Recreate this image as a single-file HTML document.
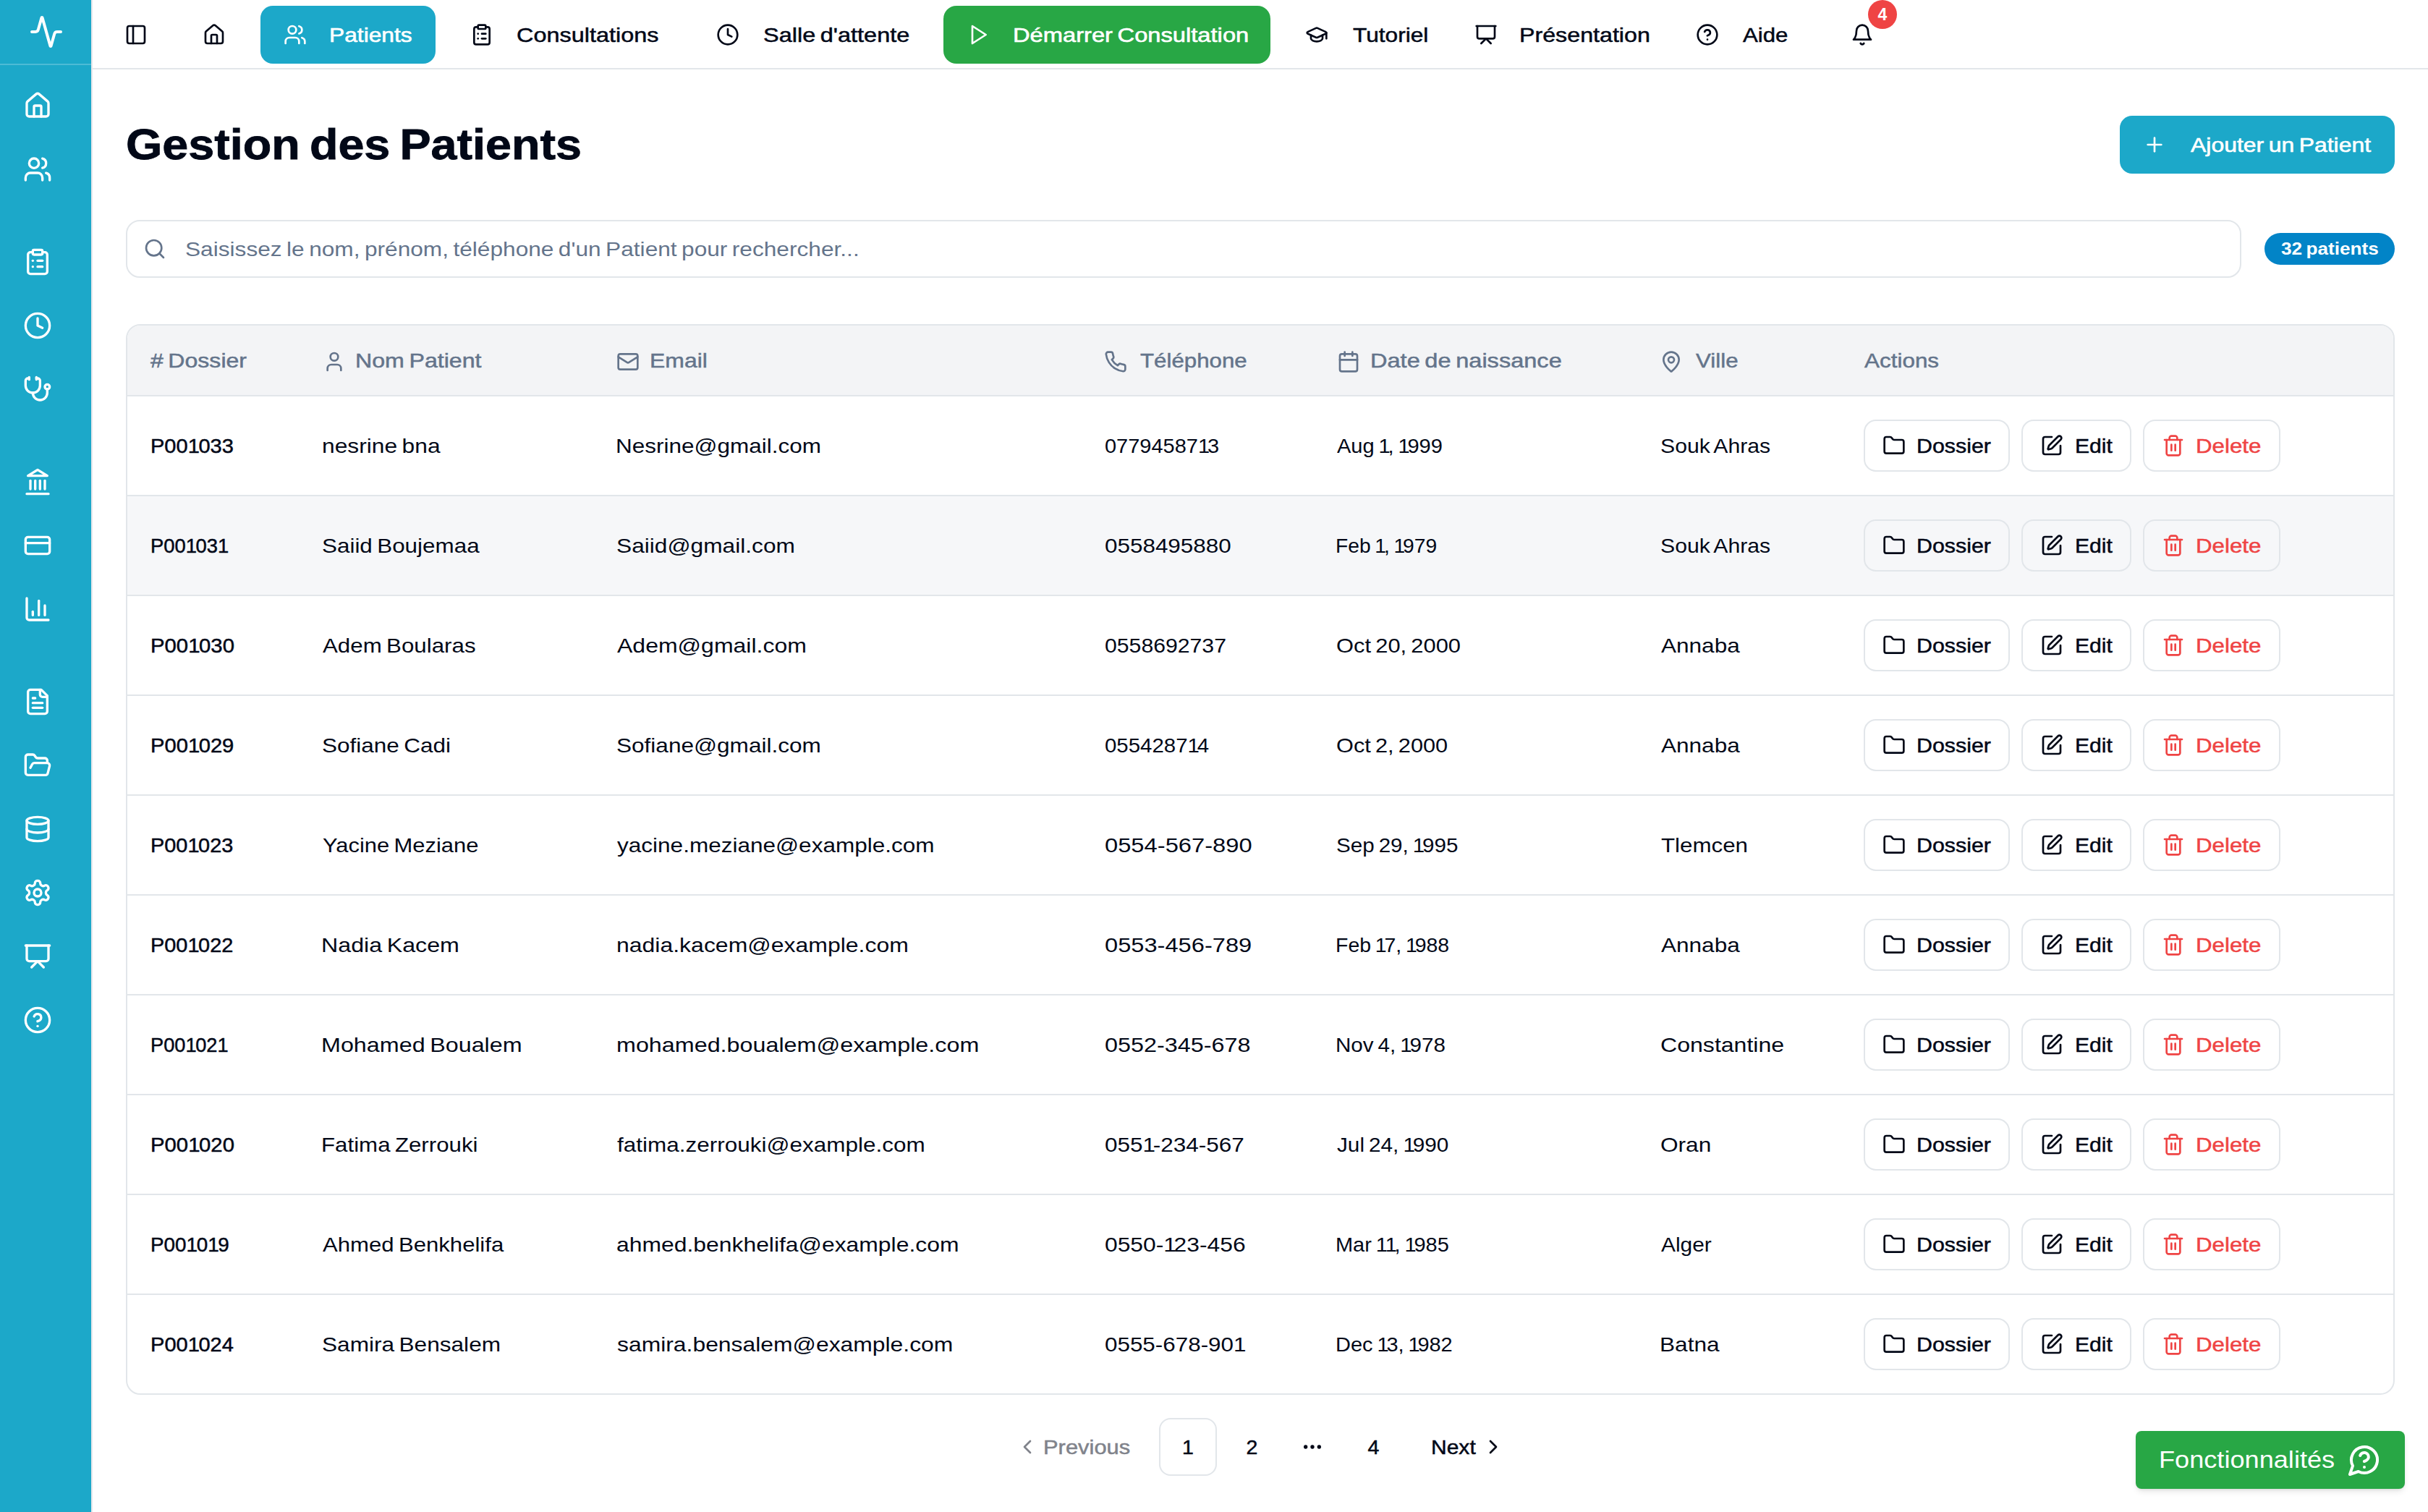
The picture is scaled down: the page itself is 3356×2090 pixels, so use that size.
<!DOCTYPE html>
<html lang="fr"><head><meta charset="utf-8"><title>Gestion des Patients</title>
<style>
html,body{margin:0;padding:0;background:#fff}
body{position:relative;width:3356px;height:2090px;overflow:hidden;font-family:"Liberation Sans",sans-serif;color:#020817}
div,.i,.t{position:absolute}
.t{white-space:pre;display:block;transform-origin:0 50%}
.t i{font-style:normal;margin-right:-0.11em}
.t b{font-weight:inherit;margin-right:-0.05em}
svg{fill:none;stroke:currentColor;stroke-width:2;stroke-linecap:round;stroke-linejoin:round;overflow:visible}
</style></head><body>
<svg width="0" height="0" style="position:absolute"><symbol id="activity" viewBox="0 0 24 24"><path d="M22 12h-2.48a2 2 0 0 0-1.93 1.46l-2.35 8.36a.25.25 0 0 1-.48 0L9.24 2.18a.25.25 0 0 0-.48 0l-2.35 8.36A2 2 0 0 1 4.49 12H2"/></symbol><symbol id="house" viewBox="0 0 24 24"><path d="M15 21v-8a1 1 0 0 0-1-1h-4a1 1 0 0 0-1 1v8"/><path d="M3 10a2 2 0 0 1 .709-1.528l7-5.999a2 2 0 0 1 2.582 0l7 5.999A2 2 0 0 1 21 10v9a2 2 0 0 1-2 2H5a2 2 0 0 1-2-2z"/></symbol><symbol id="users" viewBox="0 0 24 24"><path d="M16 21v-2a4 4 0 0 0-4-4H6a4 4 0 0 0-4 4v2"/><circle cx="9" cy="7" r="4"/><path d="M22 21v-2a4 4 0 0 0-3-3.87"/><path d="M16 3.13a4 4 0 0 1 0 7.75"/></symbol><symbol id="cliplist" viewBox="0 0 24 24"><rect width="8" height="4" x="8" y="2" rx="1" ry="1"/><path d="M16 4h2a2 2 0 0 1 2 2v14a2 2 0 0 1-2 2H6a2 2 0 0 1-2-2V6a2 2 0 0 1 2-2h2"/><path d="M12 11h4"/><path d="M12 16h4"/><path d="M8 11h.01"/><path d="M8 16h.01"/></symbol><symbol id="clock" viewBox="0 0 24 24"><circle cx="12" cy="12" r="10"/><polyline points="12 6 12 12 16 14"/></symbol><symbol id="stetho" viewBox="0 0 24 24"><path d="M11 2v2"/><path d="M5 2v2"/><path d="M5 3H4a2 2 0 0 0-2 2v4a6 6 0 0 0 12 0V5a2 2 0 0 0-2-2h-1"/><path d="M8 15a6 6 0 0 0 12 0v-3"/><circle cx="20" cy="10" r="2"/></symbol><symbol id="landmark" viewBox="0 0 24 24"><line x1="3" x2="21" y1="22" y2="22"/><line x1="6" x2="6" y1="18" y2="11"/><line x1="10" x2="10" y1="18" y2="11"/><line x1="14" x2="14" y1="18" y2="11"/><line x1="18" x2="18" y1="18" y2="11"/><polygon points="12 2 20 7 4 7"/></symbol><symbol id="card" viewBox="0 0 24 24"><rect width="20" height="14" x="2" y="5" rx="2"/><line x1="2" x2="22" y1="10" y2="10"/></symbol><symbol id="chart" viewBox="0 0 24 24"><path d="M3 3v16a2 2 0 0 0 2 2h16"/><path d="M18 17V9"/><path d="M13 17V5"/><path d="M8 17v-3"/></symbol><symbol id="filetext" viewBox="0 0 24 24"><path d="M15 2H6a2 2 0 0 0-2 2v16a2 2 0 0 0 2 2h12a2 2 0 0 0 2-2V7Z"/><path d="M14 2v4a2 2 0 0 0 2 2h4"/><path d="M10 9H8"/><path d="M16 13H8"/><path d="M16 17H8"/></symbol><symbol id="folderopen" viewBox="0 0 24 24"><path d="m6 14 1.5-2.9A2 2 0 0 1 9.24 10H20a2 2 0 0 1 1.94 2.5l-1.54 6a2 2 0 0 1-1.95 1.5H4a2 2 0 0 1-2-2V5a2 2 0 0 1 2-2h3.9a2 2 0 0 1 1.69.9l.81 1.2a2 2 0 0 0 1.67.9H18a2 2 0 0 1 2 2v2"/></symbol><symbol id="database" viewBox="0 0 24 24"><ellipse cx="12" cy="5" rx="9" ry="3"/><path d="M3 5V19A9 3 0 0 0 21 19V5"/><path d="M3 12A9 3 0 0 0 21 12"/></symbol><symbol id="settings" viewBox="0 0 24 24"><path d="M12.22 2h-.44a2 2 0 0 0-2 2v.18a2 2 0 0 1-1 1.73l-.43.25a2 2 0 0 1-2 0l-.15-.08a2 2 0 0 0-2.73.73l-.22.38a2 2 0 0 0 .73 2.73l.15.1a2 2 0 0 1 1 1.72v.51a2 2 0 0 1-1 1.74l-.15.09a2 2 0 0 0-.73 2.73l.22.38a2 2 0 0 0 2.73.73l.15-.08a2 2 0 0 1 2 0l.43.25a2 2 0 0 1 1 1.73V20a2 2 0 0 0 2 2h.44a2 2 0 0 0 2-2v-.18a2 2 0 0 1 1-1.73l.43-.25a2 2 0 0 1 2 0l.15.08a2 2 0 0 0 2.73-.73l.22-.39a2 2 0 0 0-.73-2.73l-.15-.08a2 2 0 0 1-1-1.74v-.5a2 2 0 0 1 1-1.74l.15-.09a2 2 0 0 0 .73-2.73l-.22-.38a2 2 0 0 0-2.73-.73l-.15.08a2 2 0 0 1-2 0l-.43-.25a2 2 0 0 1-1-1.73V4a2 2 0 0 0-2-2z"/><circle cx="12" cy="12" r="3"/></symbol><symbol id="present" viewBox="0 0 24 24"><path d="M2 3h20"/><path d="M21 3v11a2 2 0 0 1-2 2H5a2 2 0 0 1-2-2V3"/><path d="m7 21 5-5 5 5"/></symbol><symbol id="help" viewBox="0 0 24 24"><circle cx="12" cy="12" r="10"/><path d="M9.09 9a3 3 0 0 1 5.83 1c0 2-3 3-3 3"/><path d="M12 17h.01"/></symbol><symbol id="panel" viewBox="0 0 24 24"><rect width="18" height="18" x="3" y="3" rx="2"/><path d="M9 3v18"/></symbol><symbol id="play" viewBox="0 0 24 24"><polygon points="6 3 20 12 6 21 6 3"/></symbol><symbol id="gradcap" viewBox="0 0 24 24"><path d="M21.42 10.922a1 1 0 0 0-.019-1.838L12.83 5.18a2 2 0 0 0-1.66 0L2.6 9.08a1 1 0 0 0 0 1.832l8.57 3.908a2 2 0 0 0 1.66 0z"/><path d="M22 10v6"/><path d="M6 12.5V16a6 3 0 0 0 12 0v-3.5"/></symbol><symbol id="bell" viewBox="0 0 24 24"><path d="M6 8a6 6 0 0 1 12 0c0 7 3 9 3 9H3s3-2 3-9"/><path d="M10.3 21a1.94 1.94 0 0 0 3.4 0"/></symbol><symbol id="plus" viewBox="0 0 24 24"><path d="M5 12h14"/><path d="M12 5v14"/></symbol><symbol id="search" viewBox="0 0 24 24"><circle cx="11" cy="11" r="8"/><path d="m21 21-4.3-4.3"/></symbol><symbol id="user" viewBox="0 0 24 24"><path d="M19 21v-2a4 4 0 0 0-4-4H9a4 4 0 0 0-4 4v2"/><circle cx="12" cy="7" r="4"/></symbol><symbol id="mail" viewBox="0 0 24 24"><rect width="20" height="16" x="2" y="4" rx="2"/><path d="m22 7-8.97 5.7a1.94 1.94 0 0 1-2.06 0L2 7"/></symbol><symbol id="phone" viewBox="0 0 24 24"><path d="M22 16.92v3a2 2 0 0 1-2.18 2 19.79 19.79 0 0 1-8.63-3.07 19.5 19.5 0 0 1-6-6 19.79 19.79 0 0 1-3.07-8.67A2 2 0 0 1 4.11 2h3a2 2 0 0 1 2 1.72 12.84 12.84 0 0 0 .7 2.81 2 2 0 0 1-.45 2.11L8.09 9.91a16 16 0 0 0 6 6l1.27-1.27a2 2 0 0 1 2.11-.45 12.84 12.84 0 0 0 2.81.7A2 2 0 0 1 22 16.92z"/></symbol><symbol id="calendar" viewBox="0 0 24 24"><path d="M8 2v4"/><path d="M16 2v4"/><rect width="18" height="18" x="3" y="4" rx="2"/><path d="M3 10h18"/></symbol><symbol id="mappin" viewBox="0 0 24 24"><path d="M20 10c0 4.993-5.539 10.193-7.399 11.799a1 1 0 0 1-1.202 0C9.539 20.193 4 14.993 4 10a8 8 0 0 1 16 0"/><circle cx="12" cy="10" r="3"/></symbol><symbol id="folder" viewBox="0 0 24 24"><path d="M20 20a2 2 0 0 0 2-2V8a2 2 0 0 0-2-2h-7.9a2 2 0 0 1-1.69-.9L9.6 3.9A2 2 0 0 0 7.93 3H4a2 2 0 0 0-2 2v13a2 2 0 0 0 2 2Z"/></symbol><symbol id="pen" viewBox="0 0 24 24"><path d="M12 3H5a2 2 0 0 0-2 2v14a2 2 0 0 0 2 2h14a2 2 0 0 0 2-2v-7"/><path d="M18.375 2.625a1 1 0 0 1 3 3l-9.013 9.014a2 2 0 0 1-.853.505l-2.873.84a.5.5 0 0 1-.62-.62l.84-2.873a2 2 0 0 1 .506-.852z"/></symbol><symbol id="trash" viewBox="0 0 24 24"><path d="M3 6h18"/><path d="M19 6v14c0 1-1 2-2 2H7c-1 0-2-1-2-2V6"/><path d="M8 6V4c0-1 1-2 2-2h4c1 0 2 1 2 2v2"/><line x1="10" x2="10" y1="11" y2="17"/><line x1="14" x2="14" y1="11" y2="17"/></symbol><symbol id="chevl" viewBox="0 0 24 24"><path d="m15 18-6-6 6-6"/></symbol><symbol id="chevr" viewBox="0 0 24 24"><path d="m9 18 6-6-6-6"/></symbol><symbol id="dots" viewBox="0 0 24 24"><circle cx="12" cy="12" r="1"/><circle cx="19" cy="12" r="1"/><circle cx="5" cy="12" r="1"/></symbol><symbol id="msgq" viewBox="0 0 24 24"><path d="M7.9 20A9 9 0 1 0 4 16.1L2 22Z"/><path d="M9.09 9a3 3 0 0 1 5.83 1c0 2-3 3-3 3"/><path d="M12 17h.01"/></symbol></svg>
<div style="left:0px;top:0px;width:126px;height:2090px;background:#1ca8c9;border-right:2px solid #e5e7eb"></div>
<div style="left:0px;top:88px;width:126px;height:2px;background:rgba(255,255,255,.22)"></div>
<svg class="i" style="left:40px;top:20px;color:#fff" width="48" height="48" viewBox="0 0 24 24"><use href="#activity"/></svg>
<svg class="i" style="left:32px;top:125.5px;color:#fff" width="40" height="40" viewBox="0 0 24 24"><use href="#house"/></svg>
<svg class="i" style="left:32px;top:214px;color:#fff" width="40" height="40" viewBox="0 0 24 24"><use href="#users"/></svg>
<svg class="i" style="left:32px;top:342px;color:#fff" width="40" height="40" viewBox="0 0 24 24"><use href="#cliplist"/></svg>
<svg class="i" style="left:32px;top:430px;color:#fff" width="40" height="40" viewBox="0 0 24 24"><use href="#clock"/></svg>
<svg class="i" style="left:32px;top:518px;color:#fff" width="40" height="40" viewBox="0 0 24 24"><use href="#stetho"/></svg>
<svg class="i" style="left:32px;top:646px;color:#fff" width="40" height="40" viewBox="0 0 24 24"><use href="#landmark"/></svg>
<svg class="i" style="left:32px;top:734px;color:#fff" width="40" height="40" viewBox="0 0 24 24"><use href="#card"/></svg>
<svg class="i" style="left:32px;top:822px;color:#fff" width="40" height="40" viewBox="0 0 24 24"><use href="#chart"/></svg>
<svg class="i" style="left:32px;top:950px;color:#fff" width="40" height="40" viewBox="0 0 24 24"><use href="#filetext"/></svg>
<svg class="i" style="left:32px;top:1038px;color:#fff" width="40" height="40" viewBox="0 0 24 24"><use href="#folderopen"/></svg>
<svg class="i" style="left:32px;top:1126px;color:#fff" width="40" height="40" viewBox="0 0 24 24"><use href="#database"/></svg>
<svg class="i" style="left:32px;top:1214px;color:#fff" width="40" height="40" viewBox="0 0 24 24"><use href="#settings"/></svg>
<svg class="i" style="left:32px;top:1302px;color:#fff" width="40" height="40" viewBox="0 0 24 24"><use href="#present"/></svg>
<svg class="i" style="left:32px;top:1390px;color:#fff" width="40" height="40" viewBox="0 0 24 24"><use href="#help"/></svg>
<div style="left:128px;top:94px;width:3228px;height:2px;background:#e2e6ea"></div>
<svg class="i" style="left:172px;top:32px;color:#020817" width="32" height="32" viewBox="0 0 24 24"><use href="#panel"/></svg>
<svg class="i" style="left:280px;top:32px;color:#020817" width="32" height="32" viewBox="0 0 24 24"><use href="#house"/></svg>
<div style="left:360px;top:8px;width:242px;height:80px;background:#1ca8c9;border-radius:17px"></div>
<svg class="i" style="left:392px;top:32px;color:#fff" width="32" height="32" viewBox="0 0 24 24"><use href="#users"/></svg>
<span class="t" style="font-size:28.5px;color:#fff;-webkit-text-stroke:0.62px #fff;transform:scaleX(1.1139);left:454.9px;top:26.5px;line-height:43px;">Patients</span>
<svg class="i" style="left:650px;top:32px;color:#020817" width="32" height="32" viewBox="0 0 24 24"><use href="#cliplist"/></svg>
<span class="t" style="font-size:28.5px;color:#020817;-webkit-text-stroke:0.5px #020817;transform:scaleX(1.1375);left:713.9px;top:26.5px;line-height:43px;">Consultations</span>
<svg class="i" style="left:990px;top:32px;color:#020817" width="32" height="32" viewBox="0 0 24 24"><use href="#clock"/></svg>
<span class="t" style="font-size:28.5px;color:#020817;-webkit-text-stroke:0.5px #020817;word-spacing:-2.14px;transform:scaleX(1.1391);left:1054.7px;top:26.5px;line-height:43px;">Salle d'attente</span>
<div style="left:1304px;top:8px;width:452px;height:80px;background:#28a745;border-radius:18px"></div>
<svg class="i" style="left:1336px;top:32px;color:#fff" width="32" height="32" viewBox="0 0 24 24"><use href="#play"/></svg>
<span class="t" style="font-size:28.5px;color:#fff;-webkit-text-stroke:0.62px #fff;word-spacing:-2.14px;transform:scaleX(1.1464);left:1399.5px;top:26.5px;line-height:43px;">Démarrer Consultation</span>
<svg class="i" style="left:1804px;top:32px;color:#020817" width="32" height="32" viewBox="0 0 24 24"><use href="#gradcap"/></svg>
<span class="t" style="font-size:28.5px;color:#020817;-webkit-text-stroke:0.5px #020817;transform:scaleX(1.1107);left:1869.8px;top:26.5px;line-height:43px;">Tutoriel</span>
<svg class="i" style="left:2038px;top:32px;color:#020817" width="32" height="32" viewBox="0 0 24 24"><use href="#present"/></svg>
<span class="t" style="font-size:28.5px;color:#020817;-webkit-text-stroke:0.5px #020817;transform:scaleX(1.1302);left:2100.2px;top:26.5px;line-height:43px;">Présentation</span>
<svg class="i" style="left:2344px;top:32px;color:#020817" width="32" height="32" viewBox="0 0 24 24"><use href="#help"/></svg>
<span class="t" style="font-size:28.5px;color:#020817;-webkit-text-stroke:0.5px #020817;transform:scaleX(1.0927);left:2408.8px;top:26.5px;line-height:43px;">Aide</span>
<svg class="i" style="left:2558px;top:32px;color:#020817" width="32" height="32" viewBox="0 0 24 24"><use href="#bell"/></svg>
<div style="left:2582px;top:0px;width:40px;height:40px;background:#ef4444;border-radius:50%"></div>
<span class="t" style="font-size:23px;color:#fff;font-weight:700;left:2595.5px;top:3.0px;line-height:34px;">4</span>
<span class="t" style="font-size:60px;color:#020817;font-weight:700;-webkit-text-stroke:0.8px #020817;word-spacing:-4.50px;transform:scaleX(1.0779);left:173.8px;top:154.6px;line-height:90px;">Gestion des Patients</span>
<div style="left:2930px;top:160px;width:380px;height:80px;background:#1ca8c9;border-radius:17px"></div>
<svg class="i" style="left:2962px;top:184px;color:#fff" width="32" height="32" viewBox="0 0 24 24"><use href="#plus"/></svg>
<span class="t" style="font-size:28.5px;color:#fff;-webkit-text-stroke:0.62px #fff;word-spacing:-2.14px;transform:scaleX(1.1206);left:3028.0px;top:178.5px;line-height:43px;">Ajouter un Patient</span>
<div style="left:174px;top:304px;width:2924px;height:80px;box-sizing:border-box;border:2px solid #e2e6ea;border-radius:19px;background:#fff"></div>
<svg class="i" style="left:198px;top:328px;color:#64748b" width="32" height="32" viewBox="0 0 24 24"><use href="#search"/></svg>
<span class="t" style="font-size:28.5px;color:#64748b;word-spacing:-2.14px;transform:scaleX(1.1104);left:255.5px;top:322.5px;line-height:43px;">Saisissez le nom, prénom, téléphone d'un Patient pour rechercher...</span>
<div style="left:3130px;top:322px;width:180px;height:44px;background:#0284c7;border-radius:22px"></div>
<span class="t" style="font-size:24px;color:#fff;font-weight:700;word-spacing:-1.80px;transform:scaleX(1.0914);left:3153.0px;top:326.0px;line-height:36px;">32 patients</span>
<div style="left:174px;top:448px;width:3136px;height:1480px;box-sizing:border-box;border:2px solid #e2e6ea;border-radius:20px;overflow:hidden"><div style="left:0;top:0;width:3132px;height:96px;background:#f3f4f6"></div><div style="left:0;top:236px;width:3132px;height:136px;background:#f6f7f9"></div><div style="left:0;top:96px;width:3132px;height:2px;background:#e2e6ea"></div><div style="left:0;top:234px;width:3132px;height:2px;background:#e2e6ea"></div><div style="left:0;top:372px;width:3132px;height:2px;background:#e2e6ea"></div><div style="left:0;top:510px;width:3132px;height:2px;background:#e2e6ea"></div><div style="left:0;top:648px;width:3132px;height:2px;background:#e2e6ea"></div><div style="left:0;top:786px;width:3132px;height:2px;background:#e2e6ea"></div><div style="left:0;top:924px;width:3132px;height:2px;background:#e2e6ea"></div><div style="left:0;top:1062px;width:3132px;height:2px;background:#e2e6ea"></div><div style="left:0;top:1200px;width:3132px;height:2px;background:#e2e6ea"></div><div style="left:0;top:1338px;width:3132px;height:2px;background:#e2e6ea"></div></div>
<span class="t" style="font-size:28.5px;color:#64748b;-webkit-text-stroke:0.5px #64748b;word-spacing:-2.14px;transform:scaleX(1.1251);left:208.4px;top:476.8px;line-height:43px;"># Dossier</span>
<svg class="i" style="left:446px;top:484px;color:#64748b" width="32" height="32" viewBox="0 0 24 24"><use href="#user"/></svg>
<span class="t" style="font-size:28.5px;color:#64748b;-webkit-text-stroke:0.5px #64748b;word-spacing:-2.14px;transform:scaleX(1.1285);left:491.4px;top:476.8px;line-height:43px;">Nom Patient</span>
<svg class="i" style="left:852px;top:484px;color:#64748b" width="32" height="32" viewBox="0 0 24 24"><use href="#mail"/></svg>
<span class="t" style="font-size:28.5px;color:#64748b;-webkit-text-stroke:0.5px #64748b;transform:scaleX(1.1202);left:898.1px;top:476.8px;line-height:43px;">Email</span>
<svg class="i" style="left:1526px;top:484px;color:#64748b" width="32" height="32" viewBox="0 0 24 24"><use href="#phone"/></svg>
<span class="t" style="font-size:28.5px;color:#64748b;-webkit-text-stroke:0.5px #64748b;transform:scaleX(1.0961);left:1575.5px;top:476.8px;line-height:43px;">Téléphone</span>
<svg class="i" style="left:1848px;top:484px;color:#64748b" width="32" height="32" viewBox="0 0 24 24"><use href="#calendar"/></svg>
<span class="t" style="font-size:28.5px;color:#64748b;-webkit-text-stroke:0.5px #64748b;word-spacing:-2.14px;transform:scaleX(1.1422);left:1893.7px;top:476.8px;line-height:43px;">Date de naissance</span>
<svg class="i" style="left:2294px;top:484px;color:#64748b" width="32" height="32" viewBox="0 0 24 24"><use href="#mappin"/></svg>
<span class="t" style="font-size:28.5px;color:#64748b;-webkit-text-stroke:0.5px #64748b;transform:scaleX(1.0974);left:2343.7px;top:476.8px;line-height:43px;">Ville</span>
<span class="t" style="font-size:28.5px;color:#64748b;-webkit-text-stroke:0.5px #64748b;transform:scaleX(1.1029);left:2577.4px;top:476.8px;line-height:43px;">Actions</span>
<span class="t" style="font-size:28.5px;color:#020817;-webkit-text-stroke:0.5px #020817;transform:scaleX(1.0188);left:208.2px;top:594.5px;line-height:43px;">P00<b>1</b>033</span>
<span class="t" style="font-size:28.5px;color:#020817;word-spacing:-2.14px;transform:scaleX(1.1140);left:444.9px;top:594.5px;line-height:43px;">nesrine bna</span>
<span class="t" style="font-size:28.5px;color:#020817;transform:scaleX(1.1048);left:850.7px;top:594.5px;line-height:43px;">Nesrine@gmail.com</span>
<span class="t" style="font-size:28.5px;color:#020817;transform:scaleX(1.0168);left:1526.6px;top:594.5px;line-height:43px;">07794587<i>1</i>3</span>
<span class="t" style="font-size:28.5px;color:#020817;word-spacing:-2.14px;transform:scaleX(1.0181);left:1847.8px;top:594.5px;line-height:43px;">Aug <i>1</i>, <i>1</i>999</span>
<span class="t" style="font-size:28.5px;color:#020817;word-spacing:-2.14px;transform:scaleX(1.0595);left:2294.6px;top:594.5px;line-height:43px;">Souk Ahras</span>
<div style="left:2576px;top:580px;width:202px;height:72px;box-sizing:border-box;border:2px solid #e2e6ea;border-radius:17px"></div>
<svg class="i" style="left:2602px;top:600px;color:#020817" width="32" height="32" viewBox="0 0 24 24"><use href="#folder"/></svg>
<span class="t" style="font-size:28.5px;color:#020817;-webkit-text-stroke:0.5px #020817;transform:scaleX(1.0661);left:2648.9px;top:594.5px;line-height:43px;">Dossier</span>
<div style="left:2794px;top:580px;width:152px;height:72px;box-sizing:border-box;border:2px solid #e2e6ea;border-radius:17px"></div>
<svg class="i" style="left:2820px;top:600px;color:#020817" width="32" height="32" viewBox="0 0 24 24"><use href="#pen"/></svg>
<span class="t" style="font-size:28.5px;color:#020817;-webkit-text-stroke:0.5px #020817;transform:scaleX(1.0553);left:2868.3px;top:594.5px;line-height:43px;">Edit</span>
<div style="left:2962px;top:580px;width:190px;height:72px;box-sizing:border-box;border:2px solid #e2e6ea;border-radius:17px"></div>
<svg class="i" style="left:2988px;top:600px;color:#ef4444" width="32" height="32" viewBox="0 0 24 24"><use href="#trash"/></svg>
<span class="t" style="font-size:28.5px;color:#ef4444;-webkit-text-stroke:0.5px #ef4444;transform:scaleX(1.0977);left:3035.2px;top:594.5px;line-height:43px;">Delete</span>
<span class="t" style="font-size:28.5px;color:#020817;-webkit-text-stroke:0.5px #020817;transform:scaleX(0.9605);left:208.3px;top:732.5px;line-height:43px;">P00<b>1</b>03<b>1</b></span>
<span class="t" style="font-size:28.5px;color:#020817;word-spacing:-2.14px;transform:scaleX(1.1020);left:444.9px;top:732.5px;line-height:43px;">Saiid Boujemaa</span>
<span class="t" style="font-size:28.5px;color:#020817;transform:scaleX(1.1115);left:851.8px;top:732.5px;line-height:43px;">Saiid@gmail.com</span>
<span class="t" style="font-size:28.5px;color:#020817;transform:scaleX(1.1024);left:1526.5px;top:732.5px;line-height:43px;">0558495880</span>
<span class="t" style="font-size:28.5px;color:#020817;word-spacing:-2.14px;transform:scaleX(0.9890);left:1845.8px;top:732.5px;line-height:43px;">Feb <i>1</i>, <i>1</i>979</span>
<span class="t" style="font-size:28.5px;color:#020817;word-spacing:-2.14px;transform:scaleX(1.0595);left:2294.6px;top:732.5px;line-height:43px;">Souk Ahras</span>
<div style="left:2576px;top:718px;width:202px;height:72px;box-sizing:border-box;border:2px solid #e2e6ea;border-radius:17px"></div>
<svg class="i" style="left:2602px;top:738px;color:#020817" width="32" height="32" viewBox="0 0 24 24"><use href="#folder"/></svg>
<span class="t" style="font-size:28.5px;color:#020817;-webkit-text-stroke:0.5px #020817;transform:scaleX(1.0661);left:2648.9px;top:732.5px;line-height:43px;">Dossier</span>
<div style="left:2794px;top:718px;width:152px;height:72px;box-sizing:border-box;border:2px solid #e2e6ea;border-radius:17px"></div>
<svg class="i" style="left:2820px;top:738px;color:#020817" width="32" height="32" viewBox="0 0 24 24"><use href="#pen"/></svg>
<span class="t" style="font-size:28.5px;color:#020817;-webkit-text-stroke:0.5px #020817;transform:scaleX(1.0553);left:2868.3px;top:732.5px;line-height:43px;">Edit</span>
<div style="left:2962px;top:718px;width:190px;height:72px;box-sizing:border-box;border:2px solid #e2e6ea;border-radius:17px"></div>
<svg class="i" style="left:2988px;top:738px;color:#ef4444" width="32" height="32" viewBox="0 0 24 24"><use href="#trash"/></svg>
<span class="t" style="font-size:28.5px;color:#ef4444;-webkit-text-stroke:0.5px #ef4444;transform:scaleX(1.0977);left:3035.2px;top:732.5px;line-height:43px;">Delete</span>
<span class="t" style="font-size:28.5px;color:#020817;-webkit-text-stroke:0.5px #020817;transform:scaleX(1.0288);left:208.1px;top:870.5px;line-height:43px;">P00<b>1</b>030</span>
<span class="t" style="font-size:28.5px;color:#020817;word-spacing:-2.14px;transform:scaleX(1.0979);left:446.0px;top:870.5px;line-height:43px;">Adem Boularas</span>
<span class="t" style="font-size:28.5px;color:#020817;transform:scaleX(1.1231);left:852.9px;top:870.5px;line-height:43px;">Adem@gmail.com</span>
<span class="t" style="font-size:28.5px;color:#020817;transform:scaleX(1.0597);left:1526.5px;top:870.5px;line-height:43px;">0558692737</span>
<span class="t" style="font-size:28.5px;color:#020817;word-spacing:-2.14px;transform:scaleX(1.0823);left:1846.7px;top:870.5px;line-height:43px;">Oct 20, 2000</span>
<span class="t" style="font-size:28.5px;color:#020817;transform:scaleX(1.1066);left:2295.7px;top:870.5px;line-height:43px;">Annaba</span>
<div style="left:2576px;top:856px;width:202px;height:72px;box-sizing:border-box;border:2px solid #e2e6ea;border-radius:17px"></div>
<svg class="i" style="left:2602px;top:876px;color:#020817" width="32" height="32" viewBox="0 0 24 24"><use href="#folder"/></svg>
<span class="t" style="font-size:28.5px;color:#020817;-webkit-text-stroke:0.5px #020817;transform:scaleX(1.0661);left:2648.9px;top:870.5px;line-height:43px;">Dossier</span>
<div style="left:2794px;top:856px;width:152px;height:72px;box-sizing:border-box;border:2px solid #e2e6ea;border-radius:17px"></div>
<svg class="i" style="left:2820px;top:876px;color:#020817" width="32" height="32" viewBox="0 0 24 24"><use href="#pen"/></svg>
<span class="t" style="font-size:28.5px;color:#020817;-webkit-text-stroke:0.5px #020817;transform:scaleX(1.0553);left:2868.3px;top:870.5px;line-height:43px;">Edit</span>
<div style="left:2962px;top:856px;width:190px;height:72px;box-sizing:border-box;border:2px solid #e2e6ea;border-radius:17px"></div>
<svg class="i" style="left:2988px;top:876px;color:#ef4444" width="32" height="32" viewBox="0 0 24 24"><use href="#trash"/></svg>
<span class="t" style="font-size:28.5px;color:#ef4444;-webkit-text-stroke:0.5px #ef4444;transform:scaleX(1.0977);left:3035.2px;top:870.5px;line-height:43px;">Delete</span>
<span class="t" style="font-size:28.5px;color:#020817;-webkit-text-stroke:0.5px #020817;transform:scaleX(1.0233);left:208.2px;top:1008.5px;line-height:43px;">P00<b>1</b>029</span>
<span class="t" style="font-size:28.5px;color:#020817;word-spacing:-2.14px;transform:scaleX(1.1051);left:444.9px;top:1008.5px;line-height:43px;">Sofiane Cadi</span>
<span class="t" style="font-size:28.5px;color:#020817;transform:scaleX(1.1072);left:851.8px;top:1008.5px;line-height:43px;">Sofiane@gmail.com</span>
<span class="t" style="font-size:28.5px;color:#020817;transform:scaleX(1.0320);left:1526.6px;top:1008.5px;line-height:43px;">0554287<i>1</i>4</span>
<span class="t" style="font-size:28.5px;color:#020817;word-spacing:-2.14px;transform:scaleX(1.0771);left:1846.7px;top:1008.5px;line-height:43px;">Oct 2, 2000</span>
<span class="t" style="font-size:28.5px;color:#020817;transform:scaleX(1.1066);left:2295.7px;top:1008.5px;line-height:43px;">Annaba</span>
<div style="left:2576px;top:994px;width:202px;height:72px;box-sizing:border-box;border:2px solid #e2e6ea;border-radius:17px"></div>
<svg class="i" style="left:2602px;top:1014px;color:#020817" width="32" height="32" viewBox="0 0 24 24"><use href="#folder"/></svg>
<span class="t" style="font-size:28.5px;color:#020817;-webkit-text-stroke:0.5px #020817;transform:scaleX(1.0661);left:2648.9px;top:1008.5px;line-height:43px;">Dossier</span>
<div style="left:2794px;top:994px;width:152px;height:72px;box-sizing:border-box;border:2px solid #e2e6ea;border-radius:17px"></div>
<svg class="i" style="left:2820px;top:1014px;color:#020817" width="32" height="32" viewBox="0 0 24 24"><use href="#pen"/></svg>
<span class="t" style="font-size:28.5px;color:#020817;-webkit-text-stroke:0.5px #020817;transform:scaleX(1.0553);left:2868.3px;top:1008.5px;line-height:43px;">Edit</span>
<div style="left:2962px;top:994px;width:190px;height:72px;box-sizing:border-box;border:2px solid #e2e6ea;border-radius:17px"></div>
<svg class="i" style="left:2988px;top:1014px;color:#ef4444" width="32" height="32" viewBox="0 0 24 24"><use href="#trash"/></svg>
<span class="t" style="font-size:28.5px;color:#ef4444;-webkit-text-stroke:0.5px #ef4444;transform:scaleX(1.0977);left:3035.2px;top:1008.5px;line-height:43px;">Delete</span>
<span class="t" style="font-size:28.5px;color:#020817;-webkit-text-stroke:0.5px #020817;transform:scaleX(1.0142);left:208.2px;top:1146.5px;line-height:43px;">P00<b>1</b>023</span>
<span class="t" style="font-size:28.5px;color:#020817;word-spacing:-2.14px;transform:scaleX(1.0851);left:446.0px;top:1146.5px;line-height:43px;">Yacine Meziane</span>
<span class="t" style="font-size:28.5px;color:#020817;transform:scaleX(1.1064);left:852.9px;top:1146.5px;line-height:43px;">yacine.meziane@example.com</span>
<span class="t" style="font-size:28.5px;color:#020817;transform:scaleX(1.1473);left:1526.5px;top:1146.5px;line-height:43px;">0554-567-890</span>
<span class="t" style="font-size:28.5px;color:#020817;word-spacing:-2.14px;transform:scaleX(1.0380);left:1846.8px;top:1146.5px;line-height:43px;">Sep 29, <i>1</i>995</span>
<span class="t" style="font-size:28.5px;color:#020817;transform:scaleX(1.0974);left:2295.7px;top:1146.5px;line-height:43px;">Tlemcen</span>
<div style="left:2576px;top:1132px;width:202px;height:72px;box-sizing:border-box;border:2px solid #e2e6ea;border-radius:17px"></div>
<svg class="i" style="left:2602px;top:1152px;color:#020817" width="32" height="32" viewBox="0 0 24 24"><use href="#folder"/></svg>
<span class="t" style="font-size:28.5px;color:#020817;-webkit-text-stroke:0.5px #020817;transform:scaleX(1.0661);left:2648.9px;top:1146.5px;line-height:43px;">Dossier</span>
<div style="left:2794px;top:1132px;width:152px;height:72px;box-sizing:border-box;border:2px solid #e2e6ea;border-radius:17px"></div>
<svg class="i" style="left:2820px;top:1152px;color:#020817" width="32" height="32" viewBox="0 0 24 24"><use href="#pen"/></svg>
<span class="t" style="font-size:28.5px;color:#020817;-webkit-text-stroke:0.5px #020817;transform:scaleX(1.0553);left:2868.3px;top:1146.5px;line-height:43px;">Edit</span>
<div style="left:2962px;top:1132px;width:190px;height:72px;box-sizing:border-box;border:2px solid #e2e6ea;border-radius:17px"></div>
<svg class="i" style="left:2988px;top:1152px;color:#ef4444" width="32" height="32" viewBox="0 0 24 24"><use href="#trash"/></svg>
<span class="t" style="font-size:28.5px;color:#ef4444;-webkit-text-stroke:0.5px #ef4444;transform:scaleX(1.0977);left:3035.2px;top:1146.5px;line-height:43px;">Delete</span>
<span class="t" style="font-size:28.5px;color:#020817;-webkit-text-stroke:0.5px #020817;transform:scaleX(1.0142);left:208.2px;top:1284.5px;line-height:43px;">P00<b>1</b>022</span>
<span class="t" style="font-size:28.5px;color:#020817;word-spacing:-2.14px;transform:scaleX(1.1301);left:443.7px;top:1284.5px;line-height:43px;">Nadia Kacem</span>
<span class="t" style="font-size:28.5px;color:#020817;transform:scaleX(1.1219);left:851.8px;top:1284.5px;line-height:43px;">nadia.kacem@example.com</span>
<span class="t" style="font-size:28.5px;color:#020817;transform:scaleX(1.1450);left:1526.5px;top:1284.5px;line-height:43px;">0553-456-789</span>
<span class="t" style="font-size:28.5px;color:#020817;word-spacing:-2.14px;transform:scaleX(0.9982);left:1845.8px;top:1284.5px;line-height:43px;">Feb <i>1</i>7, <i>1</i>988</span>
<span class="t" style="font-size:28.5px;color:#020817;transform:scaleX(1.1066);left:2295.7px;top:1284.5px;line-height:43px;">Annaba</span>
<div style="left:2576px;top:1270px;width:202px;height:72px;box-sizing:border-box;border:2px solid #e2e6ea;border-radius:17px"></div>
<svg class="i" style="left:2602px;top:1290px;color:#020817" width="32" height="32" viewBox="0 0 24 24"><use href="#folder"/></svg>
<span class="t" style="font-size:28.5px;color:#020817;-webkit-text-stroke:0.5px #020817;transform:scaleX(1.0661);left:2648.9px;top:1284.5px;line-height:43px;">Dossier</span>
<div style="left:2794px;top:1270px;width:152px;height:72px;box-sizing:border-box;border:2px solid #e2e6ea;border-radius:17px"></div>
<svg class="i" style="left:2820px;top:1290px;color:#020817" width="32" height="32" viewBox="0 0 24 24"><use href="#pen"/></svg>
<span class="t" style="font-size:28.5px;color:#020817;-webkit-text-stroke:0.5px #020817;transform:scaleX(1.0553);left:2868.3px;top:1284.5px;line-height:43px;">Edit</span>
<div style="left:2962px;top:1270px;width:190px;height:72px;box-sizing:border-box;border:2px solid #e2e6ea;border-radius:17px"></div>
<svg class="i" style="left:2988px;top:1290px;color:#ef4444" width="32" height="32" viewBox="0 0 24 24"><use href="#trash"/></svg>
<span class="t" style="font-size:28.5px;color:#ef4444;-webkit-text-stroke:0.5px #ef4444;transform:scaleX(1.0977);left:3035.2px;top:1284.5px;line-height:43px;">Delete</span>
<span class="t" style="font-size:28.5px;color:#020817;-webkit-text-stroke:0.5px #020817;transform:scaleX(0.9551);left:208.3px;top:1422.5px;line-height:43px;">P00<b>1</b>02<b>1</b></span>
<span class="t" style="font-size:28.5px;color:#020817;word-spacing:-2.14px;transform:scaleX(1.1332);left:443.7px;top:1422.5px;line-height:43px;">Mohamed Boualem</span>
<span class="t" style="font-size:28.5px;color:#020817;transform:scaleX(1.1332);left:851.8px;top:1422.5px;line-height:43px;">mohamed.boualem@example.com</span>
<span class="t" style="font-size:28.5px;color:#020817;transform:scaleX(1.1347);left:1526.5px;top:1422.5px;line-height:43px;">0552-345-678</span>
<span class="t" style="font-size:28.5px;color:#020817;word-spacing:-2.14px;transform:scaleX(1.0382);left:1845.7px;top:1422.5px;line-height:43px;">Nov 4, <i>1</i>978</span>
<span class="t" style="font-size:28.5px;color:#020817;transform:scaleX(1.1254);left:2294.6px;top:1422.5px;line-height:43px;">Constantine</span>
<div style="left:2576px;top:1408px;width:202px;height:72px;box-sizing:border-box;border:2px solid #e2e6ea;border-radius:17px"></div>
<svg class="i" style="left:2602px;top:1428px;color:#020817" width="32" height="32" viewBox="0 0 24 24"><use href="#folder"/></svg>
<span class="t" style="font-size:28.5px;color:#020817;-webkit-text-stroke:0.5px #020817;transform:scaleX(1.0661);left:2648.9px;top:1422.5px;line-height:43px;">Dossier</span>
<div style="left:2794px;top:1408px;width:152px;height:72px;box-sizing:border-box;border:2px solid #e2e6ea;border-radius:17px"></div>
<svg class="i" style="left:2820px;top:1428px;color:#020817" width="32" height="32" viewBox="0 0 24 24"><use href="#pen"/></svg>
<span class="t" style="font-size:28.5px;color:#020817;-webkit-text-stroke:0.5px #020817;transform:scaleX(1.0553);left:2868.3px;top:1422.5px;line-height:43px;">Edit</span>
<div style="left:2962px;top:1408px;width:190px;height:72px;box-sizing:border-box;border:2px solid #e2e6ea;border-radius:17px"></div>
<svg class="i" style="left:2988px;top:1428px;color:#ef4444" width="32" height="32" viewBox="0 0 24 24"><use href="#trash"/></svg>
<span class="t" style="font-size:28.5px;color:#ef4444;-webkit-text-stroke:0.5px #ef4444;transform:scaleX(1.0977);left:3035.2px;top:1422.5px;line-height:43px;">Delete</span>
<span class="t" style="font-size:28.5px;color:#020817;-webkit-text-stroke:0.5px #020817;transform:scaleX(1.0288);left:208.1px;top:1560.5px;line-height:43px;">P00<b>1</b>020</span>
<span class="t" style="font-size:28.5px;color:#020817;word-spacing:-2.14px;transform:scaleX(1.0970);left:443.8px;top:1560.5px;line-height:43px;">Fatima Zerrouki</span>
<span class="t" style="font-size:28.5px;color:#020817;transform:scaleX(1.1049);left:852.9px;top:1560.5px;line-height:43px;">fatima.zerrouki@example.com</span>
<span class="t" style="font-size:28.5px;color:#020817;transform:scaleX(1.1055);left:1526.5px;top:1560.5px;line-height:43px;">055<i>1</i>-234-567</span>
<span class="t" style="font-size:28.5px;color:#020817;word-spacing:-2.14px;transform:scaleX(1.0433);left:1847.8px;top:1560.5px;line-height:43px;">Jul 24, <i>1</i>990</span>
<span class="t" style="font-size:28.5px;color:#020817;transform:scaleX(1.1089);left:2294.6px;top:1560.5px;line-height:43px;">Oran</span>
<div style="left:2576px;top:1546px;width:202px;height:72px;box-sizing:border-box;border:2px solid #e2e6ea;border-radius:17px"></div>
<svg class="i" style="left:2602px;top:1566px;color:#020817" width="32" height="32" viewBox="0 0 24 24"><use href="#folder"/></svg>
<span class="t" style="font-size:28.5px;color:#020817;-webkit-text-stroke:0.5px #020817;transform:scaleX(1.0661);left:2648.9px;top:1560.5px;line-height:43px;">Dossier</span>
<div style="left:2794px;top:1546px;width:152px;height:72px;box-sizing:border-box;border:2px solid #e2e6ea;border-radius:17px"></div>
<svg class="i" style="left:2820px;top:1566px;color:#020817" width="32" height="32" viewBox="0 0 24 24"><use href="#pen"/></svg>
<span class="t" style="font-size:28.5px;color:#020817;-webkit-text-stroke:0.5px #020817;transform:scaleX(1.0553);left:2868.3px;top:1560.5px;line-height:43px;">Edit</span>
<div style="left:2962px;top:1546px;width:190px;height:72px;box-sizing:border-box;border:2px solid #e2e6ea;border-radius:17px"></div>
<svg class="i" style="left:2988px;top:1566px;color:#ef4444" width="32" height="32" viewBox="0 0 24 24"><use href="#trash"/></svg>
<span class="t" style="font-size:28.5px;color:#ef4444;-webkit-text-stroke:0.5px #ef4444;transform:scaleX(1.0977);left:3035.2px;top:1560.5px;line-height:43px;">Delete</span>
<span class="t" style="font-size:28.5px;color:#020817;-webkit-text-stroke:0.5px #020817;transform:scaleX(0.9778);left:208.2px;top:1698.5px;line-height:43px;">P00<b>1</b>0<b>1</b>9</span>
<span class="t" style="font-size:28.5px;color:#020817;word-spacing:-2.14px;transform:scaleX(1.0919);left:446.0px;top:1698.5px;line-height:43px;">Ahmed Benkhelifa</span>
<span class="t" style="font-size:28.5px;color:#020817;transform:scaleX(1.1182);left:851.8px;top:1698.5px;line-height:43px;">ahmed.benkhelifa@example.com</span>
<span class="t" style="font-size:28.5px;color:#020817;transform:scaleX(1.1159);left:1526.5px;top:1698.5px;line-height:43px;">0550-<i>1</i>23-456</span>
<span class="t" style="font-size:28.5px;color:#020817;word-spacing:-2.14px;transform:scaleX(1.0155);left:1845.8px;top:1698.5px;line-height:43px;">Mar <i>1</i><i>1</i>, <i>1</i>985</span>
<span class="t" style="font-size:28.5px;color:#020817;transform:scaleX(1.0471);left:2295.7px;top:1698.5px;line-height:43px;">Alger</span>
<div style="left:2576px;top:1684px;width:202px;height:72px;box-sizing:border-box;border:2px solid #e2e6ea;border-radius:17px"></div>
<svg class="i" style="left:2602px;top:1704px;color:#020817" width="32" height="32" viewBox="0 0 24 24"><use href="#folder"/></svg>
<span class="t" style="font-size:28.5px;color:#020817;-webkit-text-stroke:0.5px #020817;transform:scaleX(1.0661);left:2648.9px;top:1698.5px;line-height:43px;">Dossier</span>
<div style="left:2794px;top:1684px;width:152px;height:72px;box-sizing:border-box;border:2px solid #e2e6ea;border-radius:17px"></div>
<svg class="i" style="left:2820px;top:1704px;color:#020817" width="32" height="32" viewBox="0 0 24 24"><use href="#pen"/></svg>
<span class="t" style="font-size:28.5px;color:#020817;-webkit-text-stroke:0.5px #020817;transform:scaleX(1.0553);left:2868.3px;top:1698.5px;line-height:43px;">Edit</span>
<div style="left:2962px;top:1684px;width:190px;height:72px;box-sizing:border-box;border:2px solid #e2e6ea;border-radius:17px"></div>
<svg class="i" style="left:2988px;top:1704px;color:#ef4444" width="32" height="32" viewBox="0 0 24 24"><use href="#trash"/></svg>
<span class="t" style="font-size:28.5px;color:#ef4444;-webkit-text-stroke:0.5px #ef4444;transform:scaleX(1.0977);left:3035.2px;top:1698.5px;line-height:43px;">Delete</span>
<span class="t" style="font-size:28.5px;color:#020817;-webkit-text-stroke:0.5px #020817;transform:scaleX(1.0195);left:208.2px;top:1836.5px;line-height:43px;">P00<b>1</b>024</span>
<span class="t" style="font-size:28.5px;color:#020817;word-spacing:-2.14px;transform:scaleX(1.1089);left:444.9px;top:1836.5px;line-height:43px;">Samira Bensalem</span>
<span class="t" style="font-size:28.5px;color:#020817;transform:scaleX(1.1178);left:852.9px;top:1836.5px;line-height:43px;">samira.bensalem@example.com</span>
<span class="t" style="font-size:28.5px;color:#020817;transform:scaleX(1.1012);left:1526.5px;top:1836.5px;line-height:43px;">0555-678-90<i>1</i></span>
<span class="t" style="font-size:28.5px;color:#020817;word-spacing:-2.14px;transform:scaleX(1.0170);left:1845.8px;top:1836.5px;line-height:43px;">Dec <i>1</i>3, <i>1</i>982</span>
<span class="t" style="font-size:28.5px;color:#020817;transform:scaleX(1.1084);left:2293.5px;top:1836.5px;line-height:43px;">Batna</span>
<div style="left:2576px;top:1822px;width:202px;height:72px;box-sizing:border-box;border:2px solid #e2e6ea;border-radius:17px"></div>
<svg class="i" style="left:2602px;top:1842px;color:#020817" width="32" height="32" viewBox="0 0 24 24"><use href="#folder"/></svg>
<span class="t" style="font-size:28.5px;color:#020817;-webkit-text-stroke:0.5px #020817;transform:scaleX(1.0661);left:2648.9px;top:1836.5px;line-height:43px;">Dossier</span>
<div style="left:2794px;top:1822px;width:152px;height:72px;box-sizing:border-box;border:2px solid #e2e6ea;border-radius:17px"></div>
<svg class="i" style="left:2820px;top:1842px;color:#020817" width="32" height="32" viewBox="0 0 24 24"><use href="#pen"/></svg>
<span class="t" style="font-size:28.5px;color:#020817;-webkit-text-stroke:0.5px #020817;transform:scaleX(1.0553);left:2868.3px;top:1836.5px;line-height:43px;">Edit</span>
<div style="left:2962px;top:1822px;width:190px;height:72px;box-sizing:border-box;border:2px solid #e2e6ea;border-radius:17px"></div>
<svg class="i" style="left:2988px;top:1842px;color:#ef4444" width="32" height="32" viewBox="0 0 24 24"><use href="#trash"/></svg>
<span class="t" style="font-size:28.5px;color:#ef4444;-webkit-text-stroke:0.5px #ef4444;transform:scaleX(1.0977);left:3035.2px;top:1836.5px;line-height:43px;">Delete</span>
<svg class="i" style="left:1404px;top:1984px;color:#80838b" width="32" height="32" viewBox="0 0 24 24"><use href="#chevl"/></svg>
<span class="t" style="font-size:28.5px;color:#80838b;-webkit-text-stroke:0.5px #80838b;transform:scaleX(1.0844);left:1442.0px;top:1978.5px;line-height:43px;">Previous</span>
<div style="left:1602px;top:1960px;width:80px;height:80px;box-sizing:border-box;border:2px solid #e2e6ea;border-radius:16px"></div>
<span class="t" style="font-size:28.5px;color:#020817;-webkit-text-stroke:0.5px #020817;left:1634.0px;top:1978.5px;line-height:43px;">1</span>
<span class="t" style="font-size:28.5px;color:#020817;-webkit-text-stroke:0.5px #020817;left:1722.4px;top:1978.5px;line-height:43px;">2</span>
<svg class="i" style="left:1798px;top:1984px;color:#020817" width="32" height="32" viewBox="0 0 24 24"><use href="#dots"/></svg>
<span class="t" style="font-size:28.5px;color:#020817;-webkit-text-stroke:0.5px #020817;left:1890.4px;top:1978.5px;line-height:43px;">4</span>
<span class="t" style="font-size:28.5px;color:#020817;-webkit-text-stroke:0.5px #020817;transform:scaleX(1.0532);left:1977.5px;top:1978.5px;line-height:43px;">Next</span>
<svg class="i" style="left:2048px;top:1984px;color:#020817" width="32" height="32" viewBox="0 0 24 24"><use href="#chevr"/></svg>
<div style="left:2952px;top:1978px;width:372px;height:80px;background:#28a745;border-radius:8px;box-shadow:0 5px 10px -2px rgba(0,0,0,.11),0 2px 5px -2px rgba(0,0,0,.1)"></div>
<span class="t" style="font-size:33px;color:#fff;transform:scaleX(1.0954);left:2984.2px;top:1992.5px;line-height:50px;">Fonctionnalités</span>
<svg class="i" style="left:3244px;top:1994px;color:#fff" width="48" height="48" viewBox="0 0 24 24"><use href="#msgq"/></svg>
</body></html>
